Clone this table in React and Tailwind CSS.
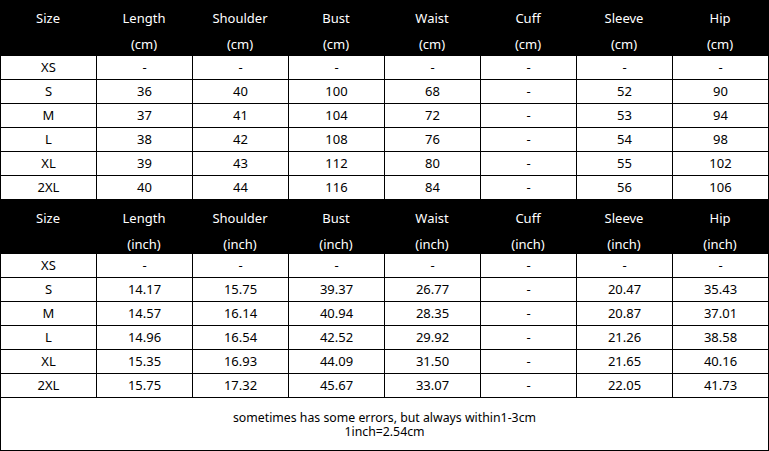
import React from "react";

const cols = ["Size", "Length", "Shoulder", "Bust", "Waist", "Cuff", "Sleeve", "Hip"];

const cmRows = [
  ["XS", "-", "-", "-", "-", "-", "-", "-"],
  ["S", "36", "40", "100", "68", "-", "52", "90"],
  ["M", "37", "41", "104", "72", "-", "53", "94"],
  ["L", "38", "42", "108", "76", "-", "54", "98"],
  ["XL", "39", "43", "112", "80", "-", "55", "102"],
  ["2XL", "40", "44", "116", "84", "-", "56", "106"],
];

const inchRows = [
  ["XS", "-", "-", "-", "-", "-", "-", "-"],
  ["S", "14.17", "15.75", "39.37", "26.77", "-", "20.47", "35.43"],
  ["M", "14.57", "16.14", "40.94", "28.35", "-", "20.87", "37.01"],
  ["L", "14.96", "16.54", "42.52", "29.92", "-", "21.26", "38.58"],
  ["XL", "15.35", "16.93", "44.09", "31.50", "-", "21.65", "40.16"],
  ["2XL", "15.75", "17.32", "45.67", "33.07", "-", "22.05", "41.73"],
];

function Header({ unit, h }) {
  return (
    <div className={`grid grid-cols-[repeat(8,96px)] bg-black text-white w-[769px] ${h}`}>
      {cols.map((c, i) => (
        <div key={c} className="flex flex-col items-center">
          <div className="h-[33px] pt-[9px] leading-[18px]">{c}</div>
          <div className="leading-[18px] pt-[2px]">{i === 0 ? "" : `(${unit})`}</div>
        </div>
      ))}
    </div>
  );
}

function Rows({ rows }) {
  return (
    <div className="w-[769px] border-r border-black">
      {rows.map((r, ri) => (
        <div key={ri} className="grid grid-cols-[repeat(8,96px)] h-[24px] border-b border-black">
          {r.map((v, ci) => (
            <div key={ci} className="border-l border-black flex items-center justify-center leading-none">
              {v}
            </div>
          ))}
        </div>
      ))}
    </div>
  );
}

export default function App() {
  return (
    <div
      className="w-[769px] h-[451px] bg-white text-black text-[13px] overflow-hidden"
      style={{ fontFamily: '"Noto Sans", "Noto Sans CJK KR", sans-serif' }}
    >
      <Header unit="cm" h="h-[56px]" />
      <Rows rows={cmRows} />
      <Header unit="inch" h="h-[54px]" />
      <Rows rows={inchRows} />
      <div className="w-[769px] h-[53px] border-l border-r border-b border-black flex flex-col items-center justify-center text-[12.3px] leading-[14px] pt-[2px]">
        <div>sometimes has some errors, but always within1-3cm</div>
        <div>1inch=2.54cm</div>
      </div>
    </div>
  );
}
